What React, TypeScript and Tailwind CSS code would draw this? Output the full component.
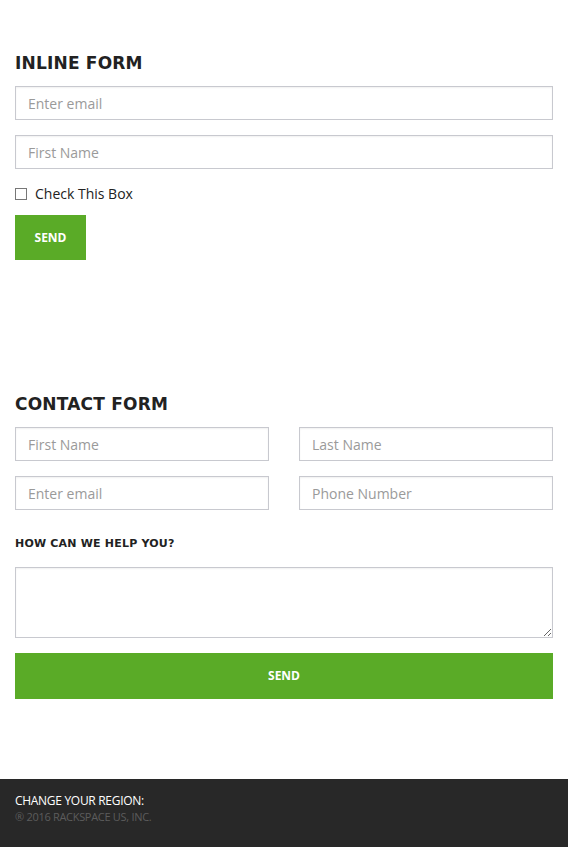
import React from "react";

const heading = "font-['DejaVu_Sans','Liberation_Sans',sans-serif] font-bold text-[#222] tracking-[0.2px]";
const input =
  "block w-full h-[34px] border border-[#c8c9cf] bg-white px-[12px] text-[14px] text-[#333] placeholder:text-[#9a9a9a] outline-none shadow-[inset_0_1px_2px_rgba(0,0,0,0.06)]";

export default function App() {
  return (
    <div className="min-h-[847px] bg-white flex flex-col font-['Open_Sans',sans-serif]">
      <main className="flex-1 px-[15px]">
        {/* Inline form */}
        <section className="pt-[52px]">
          <h2 className={`${heading} text-[17px] leading-[22px] mb-[12px]`}>INLINE FORM</h2>
          <input className={input} placeholder="Enter email" />
          <input className={`${input} mt-[15px]`} placeholder="First Name" />
          <label className="flex items-center gap-[8px] mt-[16px] text-[14px] text-[#222] leading-[18px]">
            <span className="w-[12px] h-[12px] border border-[#777] bg-white shrink-0" />
            Check This Box
          </label>
          <button className="mt-[12px] w-[71px] h-[45px] bg-[#5aab27] text-white text-[12px] font-bold">
            SEND
          </button>
        </section>

        {/* Contact form */}
        <section className="pt-[133px]">
          <h2 className={`${heading} text-[17px] leading-[22px] mb-[12px]`}>CONTACT FORM</h2>
          <div className="grid grid-cols-2 gap-x-[30px] gap-y-[15px]">
            <input className={input} placeholder="First Name" />
            <input className={input} placeholder="Last Name" />
            <input className={input} placeholder="Enter email" />
            <input className={input} placeholder="Phone Number" />
          </div>
          <h3 className={`${heading} text-[11px] leading-[14px] mt-[27px]`}>HOW CAN WE HELP YOU?</h3>
          <textarea className="block w-full h-[71px] mt-[16px] border border-[#c8c9cf] px-[12px] py-[6px] text-[14px] outline-none shadow-[inset_0_1px_2px_rgba(0,0,0,0.06)]" />
          <button className="mt-[15px] w-full h-[46px] bg-[#5aab27] text-white text-[12px] font-bold">
            SEND
          </button>
        </section>
      </main>

      <footer className="mt-[80px] h-[68px] bg-[#282828] px-[15px] pt-[14px]">
        <p className="text-[12px] leading-[16px] text-white tracking-[-0.3px]">CHANGE YOUR REGION:</p>
        <p className="text-[11px] leading-[16px] text-[#5c5c5c] tracking-[-0.3px]">® 2016 RACKSPACE US, INC.</p>
      </footer>
    </div>
  );
}
